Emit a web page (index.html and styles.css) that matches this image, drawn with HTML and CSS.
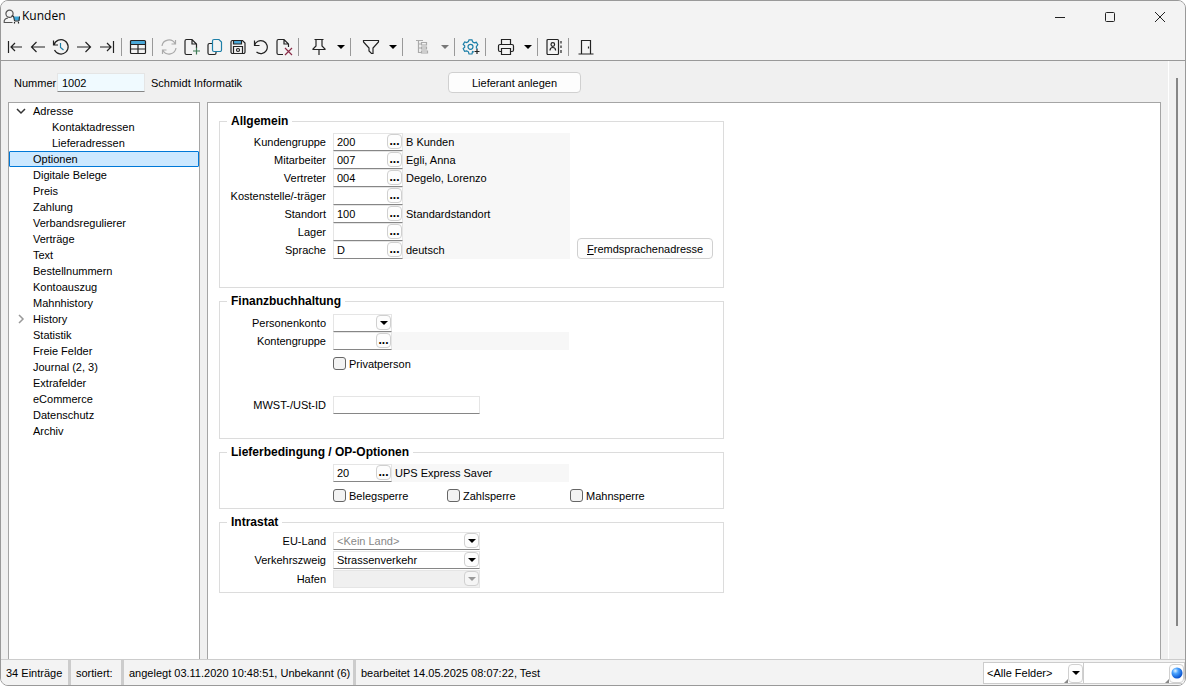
FILE: index.html
```
<!DOCTYPE html>
<html lang="de">
<head>
    <meta charset="UTF-8">
    <meta name="viewport" content="width=device-width, initial-scale=1.0">
    <title>Kunden</title>
    <link rel="stylesheet" href="styles.css">
</head>
<body>

<div class="window">

    <header class="titlebar">
        <svg class="app-icon" width="17" height="16" viewBox="0 0 17 16" fill="none" stroke="#555" stroke-width="1.2">
            <circle cx="6.500" cy="4.800" r="3.600"/>
            <path d="M9.500 13.500H1.200C.8 10.800 2.500 9.500 4.800 9.200"/>
            <path d="M10.500 7.500h6v4h-5z" fill="#3aa5d8" stroke="none"/>
            <path d="M8.500 7h2l1 5h4.500l.5-4.500" stroke="#222" stroke-width="1"/>
            <path d="M11.500 13v1.500M15.500 13v1.500" stroke="#222"/>
        </svg>
        <h1>Kunden</h1>
        <div class="window-buttons">
            <button aria-label="Minimieren"><svg width="12" height="12" viewBox="0 0 12 12"><path d="M1 6.500h10"/></svg></button>
            <button aria-label="Maximieren"><svg width="12" height="12" viewBox="0 0 12 12"><rect x="1.500" y="1.500" width="9" height="9" rx="1"/></svg></button>
            <button aria-label="Schliessen"><svg width="12" height="12" viewBox="0 0 12 12"><path d="M1 1l10 10M11 1L1 11"/></svg></button>
        </div>
    </header>

    <nav class="toolbar">
        <button aria-label="Erster"><svg width="18" height="18" viewBox="0 0 18 18"><path d="M2.500 3v12M16 9H5M9 5L5 9l4 4"/></svg></button>
        <button aria-label="Zurück"><svg width="18" height="18" viewBox="0 0 18 18"><path d="M16 9H2.500M7.500 4l-5 5 5 5"/></svg></button>
        <button aria-label="Verlauf"><svg width="18" height="18" viewBox="0 0 18 18"><path d="M1.500 2.500v4.500h4.500M2 7a7.200 7.200 0 1 1 .5 5"/><path class="blue" d="M8.500 5v4.500l3 2.500"/></svg></button>
        <button aria-label="Vor"><svg width="18" height="18" viewBox="0 0 18 18"><path d="M2 9h13.500M10.500 4l5 5-5 5"/></svg></button>
        <button aria-label="Letzter"><svg width="18" height="18" viewBox="0 0 18 18"><path d="M15.500 3v12M2 9h11M9 5l4 4-4 4"/></svg></button>
        <span class="separator"></span>
        <button aria-label="Tabelle"><svg width="18" height="18" viewBox="0 0 18 18"><path d="M1.500 3h15v3.500h-15z" fill="#4aa8d8" stroke="none"/><rect x="1.500" y="2.500" width="15" height="13" rx="1"/><path d="M1.500 6.500h15M1.500 11h15M9 6.500v9"/></svg></button>
        <span class="separator"></span>
        <button aria-label="Aktualisieren" disabled><svg width="18" height="18" viewBox="0 0 18 18"><path d="M2 8a7 7 0 0 1 13-2.500M15.500 2v4h-4M16 10a7 7 0 0 1-13 2.500M2.500 16v-4h4"/></svg></button>
        <button aria-label="Neu"><svg width="18" height="18" viewBox="0 0 18 18"><path d="M9 16.500H3.500a1.500 1.500 0 0 1-1.500-1.500V3a1.500 1.500 0 0 1 1.500-1.500h5.500l4.500 4.500v4M9 1.500V6h4.500"/><path class="green" d="M13.500 9.500v7M10 13h7"/></svg></button>
        <button aria-label="Kopieren"><svg width="18" height="18" viewBox="0 0 18 18"><path d="M6 5.500H3.500a1.500 1.500 0 0 0-1.500 1.500v8a1.500 1.500 0 0 0 1.500 1.500h5a1.500 1.500 0 0 0 1.500-1.500v-1.500"/><path class="blue" d="M8 1.500h5l2.500 2.500v8a1.500 1.500 0 0 1-1.500 1.500H8a1.500 1.500 0 0 1-1.500-1.500V3a1.500 1.500 0 0 1 1.500-1.500z"/></svg></button>
        <button aria-label="Speichern"><svg width="18" height="18" viewBox="0 0 18 18"><path d="M4.500 2.500h8v3.500h-8z" fill="#4aa8d8"/><path d="M3.500 2.500h10l2.500 2.500v9a1.500 1.500 0 0 1-1.500 1.500h-11a1.500 1.500 0 0 1-1.500-1.500V4a1.500 1.500 0 0 1 1.500-1.500z"/><path d="M4.500 15.500v-7h9v7"/><circle cx="9" cy="12" r="1.500"/></svg></button>
        <button aria-label="Rückgängig"><svg width="18" height="18" viewBox="0 0 18 18"><path d="M2.500 2.500v5h5M2.500 7.500a6.500 6.500 0 1 1 2 6.500"/></svg></button>
        <button aria-label="Löschen"><svg width="18" height="18" viewBox="0 0 18 18"><path d="M8 16.500H3.500a1.500 1.500 0 0 1-1.500-1.500V3a1.500 1.500 0 0 1 1.500-1.500h5.500l4.500 4.500v3M9 1.500V6h4.500"/><path class="red" d="M10 10l7 7M17 10l-7 7"/></svg></button>
        <span class="separator"></span>
        <button class="split" aria-label="Anheften"><svg width="18" height="18" viewBox="0 0 18 18"><path d="M4.500 1.500h9M6 1.500v6.500L3 11v.5h12V11L12 8v-6.500M9 11.500V17"/></svg><i class="arrow"></i></button>
        <span class="separator"></span>
        <button class="split" aria-label="Filter"><svg width="18" height="18" viewBox="0 0 18 18"><path d="M1.500 2.500h15v1.500L11 10v5.500H9.500L7 13v-3L1.500 4z"/></svg><i class="arrow"></i></button>
        <span class="separator"></span>
        <button class="split" aria-label="Struktur" disabled><svg width="18" height="18" viewBox="0 0 18 18"><path d="M2 2.500h7M4.500 2.500v12h3M4.500 6h3M4.500 10h3M7.500 4.500h5v2.500h-5zM7.500 9h5v2h-5zM7.500 13h6v2h-6z"/></svg><i class="arrow"></i></button>
        <span class="separator"></span>
        <button aria-label="Einstellungen"><svg width="18" height="18" viewBox="0 0 18 18"><path class="blue" d="M12 14l-1.500-.4-.5 2.400H7l-.6-2.200-1.700-1-2.100.5L1.200 10.700l1.500-1.500V7.800L1.200 6.500 2.700 4l2 .6 1.700-1L7 1.800h3l.6 2 1.700 1 2-.5 1.500 2.500-1.400 1.700v1.400l1 1"/><circle class="blue" cx="8.500" cy="8.800" r="2.500"/><path d="M15 11v5M12.500 13.500h5"/></svg></button>
        <span class="separator"></span>
        <button class="split" aria-label="Drucken"><svg width="18" height="18" viewBox="0 0 18 18"><path d="M4.500 6.500v-5h9v5M4.500 13.500H3A1.500 1.500 0 0 1 1.500 12V8A1.500 1.500 0 0 1 3 6.500h12A1.500 1.500 0 0 1 16.500 8v4a1.500 1.500 0 0 1-1.500 1.500h-1.500M4.500 10.500h9v6h-9z"/></svg><i class="arrow"></i></button>
        <span class="separator"></span>
        <button aria-label="Kontakte"><svg width="18" height="18" viewBox="0 0 18 18"><rect x="2" y="1.500" width="11.500" height="15" rx="1"/><circle cx="7.800" cy="6.500" r="1.800"/><path d="M5 12.500c0-4 5.600-4 5.600 0M16 3v2.500M16 7.500V10M16 12v3"/></svg></button>
        <span class="separator"></span>
        <button aria-label="Beenden"><svg width="18" height="18" viewBox="0 0 18 18"><path d="M5.500 16V2.500h9V16M2.500 16h15M12.500 8.500v2"/></svg></button>
    </nav>

    <main class="main">
        <div class="content">

            <div class="record">
                <label for="nummer">Nummer</label>
                <input class="number" type="text" id="nummer" value="1002">
                <span class="record-name">Schmidt Informatik</span>
                <button class="btn">Lieferant anlegen</button>
            </div>

            <div class="columns">
                <ul class="tree">
                    <li><a href="#"><svg class="chevron open" width="10" height="10" viewBox="0 0 10 10"><path d="M1 3l4 4 4-4"/></svg>Adresse</a>
                        <ul>
                            <li><a href="#">Kontaktadressen</a></li>
                            <li><a href="#">Lieferadressen</a></li>
                        </ul>
                    </li>
                    <li><a class="selected" href="#">Optionen</a></li>
                    <li><a href="#">Digitale Belege</a></li>
                    <li><a href="#">Preis</a></li>
                    <li><a href="#">Zahlung</a></li>
                    <li><a href="#">Verbandsregulierer</a></li>
                    <li><a href="#">Verträge</a></li>
                    <li><a href="#">Text</a></li>
                    <li><a href="#">Bestellnummern</a></li>
                    <li><a href="#">Kontoauszug</a></li>
                    <li><a href="#">Mahnhistory</a></li>
                    <li><a href="#"><svg class="chevron" width="10" height="10" viewBox="0 0 10 10"><path d="M3 1l4 4-4 4"/></svg>History</a></li>
                    <li><a href="#">Statistik</a></li>
                    <li><a href="#">Freie Felder</a></li>
                    <li><a href="#">Journal (2, 3)</a></li>
                    <li><a href="#">Extrafelder</a></li>
                    <li><a href="#">eCommerce</a></li>
                    <li><a href="#">Datenschutz</a></li>
                    <li><a href="#">Archiv</a></li>
                </ul>

                <form class="panel">
                    <fieldset class="general">
                        <legend>Allgemein</legend>
                        <div class="rows">
                            <div class="row"><label for="kundengruppe">Kundengruppe</label><div class="field"><input type="text" id="kundengruppe" value="200"><button type="button" class="lookup" aria-label="Suchen">...</button></div><span class="info">B Kunden</span></div>
                            <div class="row"><label for="mitarbeiter">Mitarbeiter</label><div class="field"><input type="text" id="mitarbeiter" value="007"><button type="button" class="lookup" aria-label="Suchen">...</button></div><span class="info">Egli, Anna</span></div>
                            <div class="row"><label for="vertreter">Vertreter</label><div class="field"><input type="text" id="vertreter" value="004"><button type="button" class="lookup" aria-label="Suchen">...</button></div><span class="info">Degelo, Lorenzo</span></div>
                            <div class="row"><label for="kostenstelle">Kostenstelle/-träger</label><div class="field"><input type="text" id="kostenstelle"><button type="button" class="lookup" aria-label="Suchen">...</button></div><span class="info"></span></div>
                            <div class="row"><label for="standort">Standort</label><div class="field"><input type="text" id="standort" value="100"><button type="button" class="lookup" aria-label="Suchen">...</button></div><span class="info">Standardstandort</span></div>
                            <div class="row"><label for="lager">Lager</label><div class="field"><input type="text" id="lager"><button type="button" class="lookup" aria-label="Suchen">...</button></div><span class="info"></span></div>
                            <div class="row"><label for="sprache">Sprache</label><div class="field"><input type="text" id="sprache" value="D"><button type="button" class="lookup" aria-label="Suchen">...</button></div><span class="info">deutsch</span></div>
                        </div>
                        <button type="button" class="btn"><u>F</u>remdsprachenadresse</button>
                    </fieldset>

                    <fieldset class="accounting">
                        <legend>Finanzbuchhaltung</legend>
                        <div class="row"><label for="personenkonto">Personenkonto</label><div class="field short"><select id="personenkonto"><option></option></select><span class="drop"><i class="arrow"></i></span></div></div>
                        <div class="row"><label for="kontengruppe">Kontengruppe</label><div class="field short"><input type="text" id="kontengruppe"><button type="button" class="lookup" aria-label="Suchen">...</button></div><span class="info"></span></div>
                        <div class="checks"><label><input type="checkbox">Privatperson</label></div>
                        <div class="row vat"><label for="mwst">MWST-/USt-ID</label><div class="field long"><input type="text" id="mwst"></div></div>
                    </fieldset>

                    <fieldset class="delivery">
                        <legend>Lieferbedingung / OP-Optionen</legend>
                        <div class="row"><span class="label"></span><div class="field short"><input type="text" value="20" aria-label="Lieferbedingung"><button type="button" class="lookup" aria-label="Suchen">...</button></div><span class="info">UPS Express Saver</span></div>
                        <div class="checks">
                            <label><input type="checkbox">Belegsperre</label>
                            <label><input type="checkbox">Zahlsperre</label>
                            <label><input type="checkbox">Mahnsperre</label>
                        </div>
                    </fieldset>

                    <fieldset class="intrastat">
                        <legend>Intrastat</legend>
                        <div class="row"><label for="euland">EU-Land</label><div class="field long"><select id="euland" class="placeholder"><option>&lt;Kein Land&gt;</option></select><span class="drop"><i class="arrow"></i></span></div></div>
                        <div class="row"><label for="verkehr">Verkehrszweig</label><div class="field long"><select id="verkehr"><option>Strassenverkehr</option></select><span class="drop"><i class="arrow"></i></span></div></div>
                        <div class="row"><label for="hafen">Hafen</label><div class="field long disabled"><select id="hafen" disabled><option></option></select><span class="drop"><i class="arrow"></i></span></div></div>
                    </fieldset>
                </form>
            </div>
        </div>

        <div class="scroll"><div class="thumb"></div></div>
    </main>

    <footer class="statusbar">
        <span class="cell count">34 Einträge</span>
        <span class="cell sort">sortiert:</span>
        <span class="cell created">angelegt 03.11.2020 10:48:51, Unbekannt (6)</span>
        <span class="cell edited">bearbeitet 14.05.2025 08:07:22, Test</span>
        <div class="search">
            <div class="search-field"><select aria-label="Suchfeld"><option>&lt;Alle Felder&gt;</option></select><i class="grip"></i><span class="drop"><i class="arrow"></i></span></div>
            <div class="search-field"><input type="text" aria-label="Suche"><i class="grip"></i><button class="drop" aria-label="Suchen"><svg width="12" height="12" viewBox="0 0 12 12"><defs><radialGradient id="ball" cx="35%" cy="30%" r="75%"><stop offset="0" stop-color="#e4f3ff"/><stop offset="0.35" stop-color="#4aa3ff"/><stop offset="1" stop-color="#0048c8"/></radialGradient></defs><circle cx="6" cy="6" r="5.500" fill="url(#ball)"/></svg></button></div>
        </div>
    </footer>

</div>

</body>
</html>
```
FILE: styles.css
```
/* Global Styles */
* {
    box-sizing: border-box;
}

body {
    margin: 0;
    background-color: #fff;
    color: #000;
    font-family: "Liberation Sans", Arial, sans-serif;
    font-size: 11px;
    line-height: 16px;
}

button,
input,
select {
    margin: 0;
    padding: 0;
    border: 0;
    background: none;
    color: inherit;
    font: inherit;
}

.window {
    display: flex;
    flex-direction: column;
    height: 100vh;
    border: 1px solid #999;
    border-radius: 8px;
    background-color: #f0f0f0;
    overflow: hidden;
}

/* Title bar */
.titlebar {
    display: flex;
    align-items: center;
    height: 30px;
    padding: 2px 0 0 2px;
    background-color: #f3f3f3;
}

.titlebar h1 {
    flex: 1;
    margin: 0 0 2px 2px;
    font-family: "Open Sans", sans-serif;
    font-size: 12px;
    font-weight: normal;
}

.window-buttons {
    display: flex;
}

.window-buttons button {
    display: flex;
    align-items: center;
    justify-content: center;
    width: 50px;
    height: 28px;
}

.window-buttons svg {
    fill: none;
    stroke: #222;
}

/* Toolbar */
.toolbar {
    display: flex;
    align-items: center;
    height: 30px;
    padding: 2px 0 0 2px;
    border-bottom: 1px solid #999;
    background-color: #f3f3f3;
}

.toolbar button {
    display: flex;
    align-items: center;
    justify-content: center;
    width: 23px;
    height: 24px;
}

.toolbar svg {
    fill: none;
    stroke: #222;
    stroke-width: 1.2;
}

.toolbar .blue {
    stroke: #1d7fa8;
}

.toolbar .green {
    stroke: #3c7a55;
}

.toolbar .red {
    stroke: #8a2c48;
}

.toolbar button:disabled svg {
    stroke: #aaa;
}

.toolbar button:disabled .arrow {
    border-top-color: #777;
}

.toolbar .split {
    justify-content: flex-start;
    gap: 9px;
    width: 44px;
    padding-left: 7px;
}

.separator {
    width: 1px;
    height: 18px;
    margin: 0 4px 0 3px;
    background-color: #999;
}

.arrow {
    border: 4px solid transparent;
    border-top-color: #000;
    border-bottom: 0;
}

/* Main area */
.main {
    display: flex;
    flex: 1;
    min-height: 0;
}

.content {
    display: flex;
    flex: 1;
    flex-direction: column;
    padding: 0 7px;
}

.scroll {
    width: 17px;
    padding: 17px 7px 33px;
    border-left: 1px solid #fff;
}

.thumb {
    width: 2px;
    height: 100%;
    background-color: #868686;
}

.record {
    display: flex;
    align-items: center;
    height: 41px;
    padding: 2px 6px 0;
}

.record label {
    width: 43px;
}

.record .number {
    width: 88px;
    height: 19px;
    padding-left: 4px;
    border: 1px solid #e5e5e5;
    border-bottom-color: #868686;
    background-color: #f0faff;
}

.record-name {
    width: 303px;
    padding-left: 6px;
}

.btn {
    min-width: 133px;
    height: 21px;
    padding: 0 9px;
    border: 1px solid #d0d0d0;
    border-radius: 4px;
    background-color: #fdfdfd;
}

.columns {
    display: flex;
    flex: 1;
    gap: 7px;
    min-height: 0;
}

/* Navigation tree */
.tree {
    width: 192px;
    margin: 0;
    padding: 0;
    border: 1px solid #a5a5a5;
    border-bottom: 0;
    background-color: #fff;
    list-style: none;
}

.tree ul {
    padding: 0;
    list-style: none;
}

.tree a {
    display: flex;
    align-items: center;
    height: 16px;
    padding-left: 24px;
    color: inherit;
    text-decoration: none;
}

.tree ul a {
    padding-left: 43px;
}

.tree .selected {
    padding-left: 23px;
    border: 1px solid #0078d7;
    border-radius: 1px;
    background-color: #cce8ff;
}

.chevron {
    margin-left: -17px;
    margin-right: 7px;
    fill: none;
    stroke: #999;
    stroke-width: 1.5;
}

.chevron.open {
    stroke: #333;
}

/* Form */
.panel {
    flex: 1;
    padding: 11px;
    border: 1px solid #a5a5a5;
    border-bottom: 0;
    background-color: #fff;
    overflow: hidden;
}

fieldset {
    max-width: 505px;
    min-width: 0;
    margin: 0 0 6px;
    padding: 5px 0 0;
    border: 1px solid #dcdcdc;
}

legend {
    margin-left: 7px;
    padding: 0 4px;
    font-size: 12px;
    font-weight: bold;
    line-height: 14px;
}

.general {
    display: flex;
    align-items: flex-end;
    gap: 7px;
    padding-bottom: 28px;
}

.accounting {
    padding-top: 6px;
    padding-bottom: 24px;
}

.delivery {
    padding-bottom: 4px;
}

.intrastat {
    padding-top: 3px;
    padding-bottom: 3px;
}

.row {
    display: flex;
    height: 18px;
}

.intrastat .row {
    margin-bottom: 1px;
}

.row label,
.row .label {
    width: 106px;
    margin-right: 7px;
    line-height: 18px;
    text-align: right;
}

.field {
    display: flex;
    width: 70px;
    border: 1px solid #e5e5e5;
    border-bottom-color: #868686;
    background-color: #fff;
}

.field.short {
    width: 59px;
}

.field.long {
    width: 147px;
}

.field input,
.field select {
    flex: 1;
    min-width: 0;
    padding-left: 3px;
    appearance: none;
}

.field .placeholder {
    color: #888;
}

.field.disabled {
    border-color: #e5e5e5;
    background-color: #f0f0f0;
}

.field.disabled .arrow {
    border-top-color: #999;
}

.lookup,
.drop {
    width: 15px;
    height: 15px;
    border: 1px solid #d0d0d0;
    border-radius: 4px;
    background-color: #fdfdfd;
}

.lookup {
    font-size: 12px;
    font-weight: bold;
    line-height: 13px;
}

.drop {
    display: flex;
    align-items: center;
    justify-content: center;
    pointer-events: none;
}

.field.disabled .drop {
    background-color: #f5f5f5;
}

.info {
    width: 167px;
    padding-left: 3px;
    background-color: #f7f7f7;
    line-height: 18px;
}

.short + .info {
    width: 177px;
}

.checks {
    display: flex;
    padding: 5px 0 0 113px;
}

.checks label {
    display: flex;
    align-items: center;
    gap: 3px;
    width: 114px;
    height: 17px;
}

.checks label + label {
    width: 123px;
}

.checks input {
    width: 13px;
    height: 13px;
    border: 1px solid #666;
    border-radius: 3px;
    background-color: #f3f3f3;
    appearance: none;
}

.vat {
    margin-top: 24px;
}

/* Status bar */
.statusbar {
    display: flex;
    height: 26px;
    border-top: 1px solid #ccc;
    background-color: #f3f3f3;
}

.cell {
    padding: 0 5px;
    border-right: 3px solid #ccc;
    line-height: 26px;
    white-space: nowrap;
}

.count {
    width: 70px;
}

.sort {
    width: 53px;
}

.created {
    width: 232px;
}

.edited {
    flex: 1;
    border-right: 0;
}

.search {
    display: flex;
    padding: 2px 0 1px;
}

.search-field {
    display: flex;
    align-items: center;
    width: 101px;
    border: 1px solid #ccc;
    background-color: #fff;
}

.search-field + .search-field {
    border-left: 0;
}

.search-field select,
.search-field input {
    flex: 1;
    min-width: 0;
    padding-left: 3px;
    appearance: none;
}

.search-field .drop {
    height: 19px;
}

/* Small resize corner beside the buttons */
.grip {
    align-self: flex-end;
    border: 2px solid transparent;
    border-right-color: #888;
    border-bottom-color: #888;
}
```
